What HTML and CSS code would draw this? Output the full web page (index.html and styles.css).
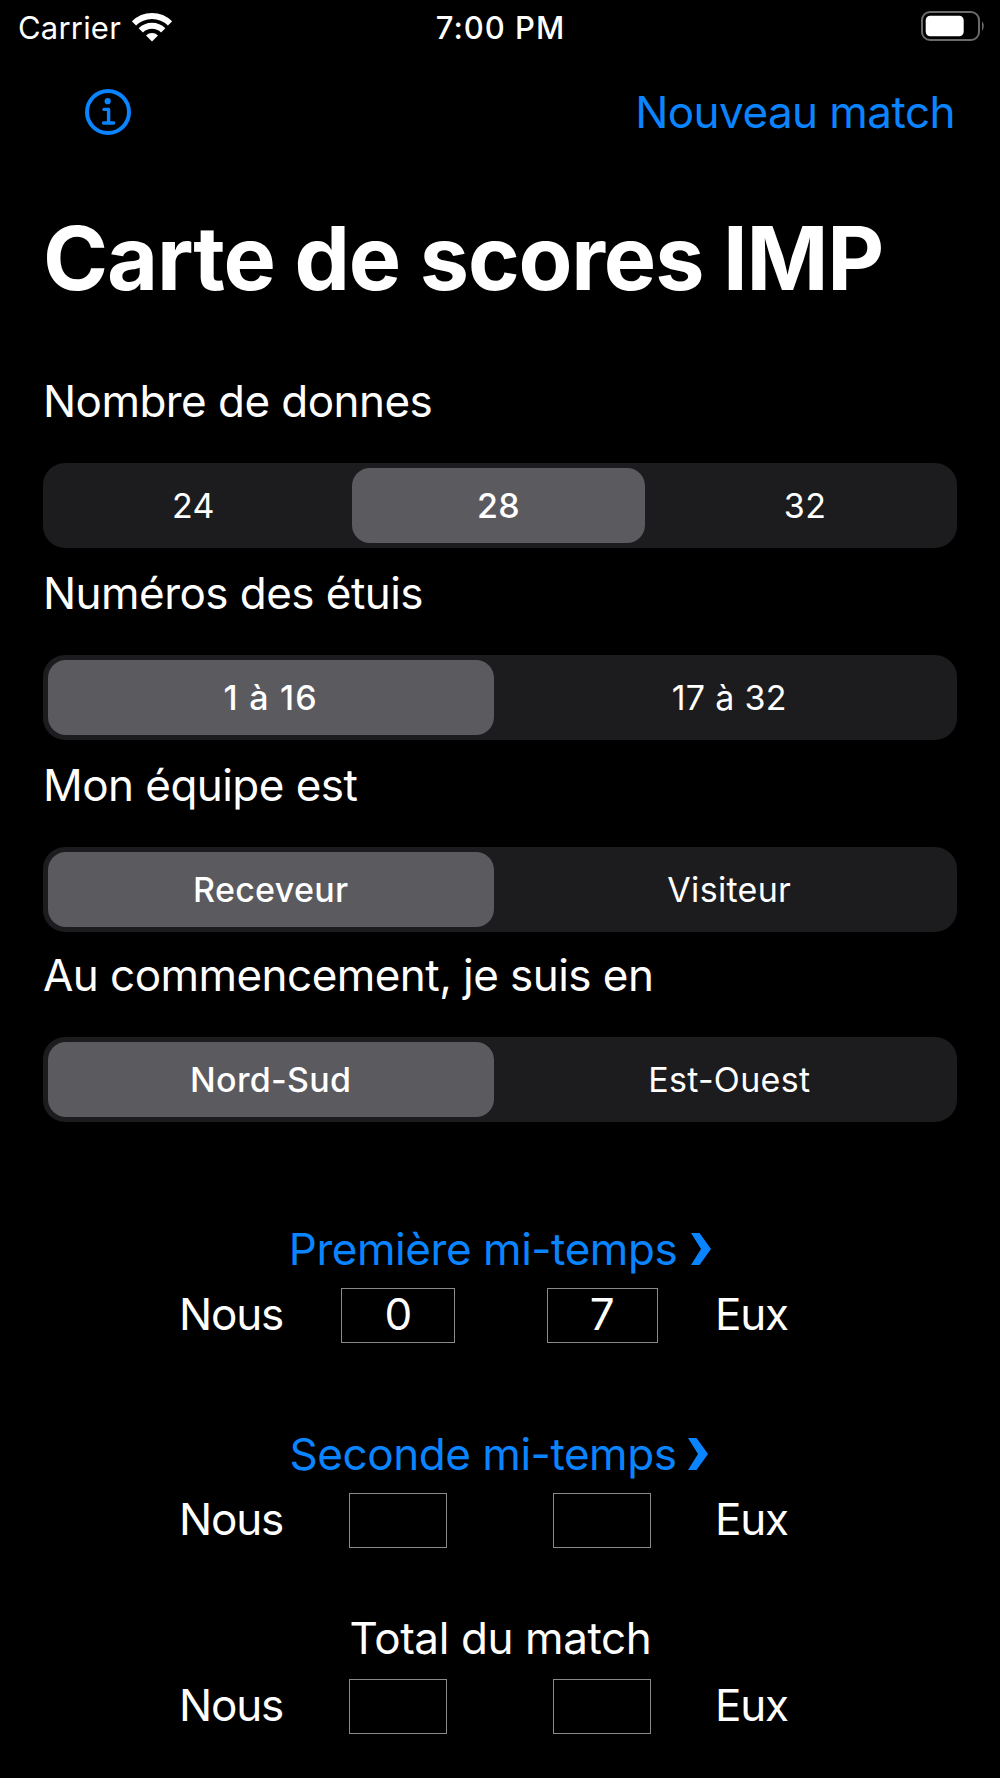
FILE: index.html
```html
<!DOCTYPE html>
<html lang="fr">
<head>
    <meta charset="UTF-8">
    <meta name="viewport" content="width=device-width, initial-scale=1.0">
    <title>Carte de scores IMP</title>
    <link rel="stylesheet" href="styles.css">
</head>
<body>
    <div id="app">
        <!-- Status bar -->
        <div class="status-bar">
            <div class="carrier">
                <span>Carrier</span>
                <svg width="40" height="29" viewBox="0 0 40 29">
                    <path d="M2 10.5 A25.5 25.5 0 0 1 38 10.5" fill="none" stroke="#fff" stroke-width="6"/>
                    <path d="M8.8 17.3 A15.8 15.8 0 0 1 31.2 17.3" fill="none" stroke="#fff" stroke-width="6"/>
                    <path d="M20 28.5 L14 22.4 A8.6 8.6 0 0 1 26 22.4 Z" fill="#fff"/>
                </svg>
            </div>
            <span class="time">7:00 PM</span>
            <svg class="battery" width="64" height="30" viewBox="0 0 64 30">
                <rect x="1" y="1" width="57" height="28" rx="8" fill="none" stroke="#6b6b6b" stroke-width="2"/>
                <rect x="4.7" y="4.7" width="38" height="20.6" rx="4.5" fill="#fff"/>
                <path d="M61 10 Q64.5 15 61 20 Z" fill="#6b6b6b"/>
            </svg>
        </div>

        <!-- Navigation -->
        <nav class="nav-bar">
            <a href="#" aria-label="Informations">
                <svg width="46" height="46" viewBox="0 0 46 46" fill="none" stroke="#0a84ff">
                    <circle cx="23" cy="23" r="21" stroke-width="4"/>
                    <circle cx="22.7" cy="12.2" r="3.1" fill="#0a84ff" stroke="none"/>
                    <path d="M19 20.4 H23.6 V34 M18.6 34 H28.6" stroke-width="3.4" stroke-linecap="round" stroke-linejoin="round"/>
                </svg>
            </a>
            <a href="#">Nouveau match</a>
        </nav>

        <h1>Carte de scores IMP</h1>

        <!-- Match settings -->
        <div class="field">
            <p>Nombre de donnes</p>
            <div class="segments three">
                <button>24</button>
                <button class="selected">28</button>
                <button>32</button>
            </div>
        </div>
        <div class="field">
            <p>Numéros des étuis</p>
            <div class="segments">
                <button class="selected range">1 à 16</button>
                <button>17 à 32</button>
            </div>
        </div>
        <div class="field">
            <p>Mon équipe est</p>
            <div class="segments">
                <button class="selected">Receveur</button>
                <button>Visiteur</button>
            </div>
        </div>
        <div class="field last">
            <p>Au commencement, je suis en</p>
            <div class="segments">
                <button class="selected">Nord-Sud</button>
                <button>Est-Ouest</button>
            </div>
        </div>

        <!-- Scores -->
        <div class="half first-half">
            <a href="#">
                <span>Première mi-temps</span>
                <svg width="20" height="32" viewBox="0 0 20 32"><path d="M0 0 H8.5 L20 16 L8.5 32 H0 L10 16 Z" fill="#0a84ff"/></svg>
            </a>
            <div class="score">
                <span>Nous</span>
                <div><output class="wide">0</output></div>
                <div><output class="medium">7</output></div>
                <span>Eux</span>
            </div>
        </div>
        <div class="half second-half">
            <a href="#">
                <span>Seconde mi-temps</span>
                <svg width="20" height="32" viewBox="0 0 20 32"><path d="M0 0 H8.5 L20 16 L8.5 32 H0 L10 16 Z" fill="#0a84ff"/></svg>
            </a>
            <div class="score">
                <span>Nous</span>
                <div><output></output></div>
                <div><output></output></div>
                <span>Eux</span>
            </div>
        </div>
        <div class="half total">
            <p>Total du match</p>
            <div class="score">
                <span>Nous</span>
                <div><output></output></div>
                <div><output></output></div>
                <span>Eux</span>
            </div>
        </div>
    </div>
</body>
</html>
```
FILE: styles.css
```css
/* Global Styles */
* {
    box-sizing: border-box;
}

body {
    margin: 0;
    background: #000;
    color: #fff;
    font-family: Inter, 'Liberation Sans', sans-serif;
    font-size: 44px;
    letter-spacing: -0.55px;
}

#app {
    width: 1000px;
    height: 1778px;
    overflow: hidden;
}

p {
    margin: 0;
}

a {
    color: #0a84ff;
    text-decoration: none;
}

svg {
    display: block;
}

/* Status bar */
.status-bar {
    display: grid;
    grid-template-columns: 1fr auto 1fr;
    align-items: center;
    height: 55px;
    padding: 0 15px 0 18px;
    font-size: 31px;
    letter-spacing: 0.2px;
}

.carrier {
    display: flex;
    align-items: center;
    gap: 11px;
}

.time {
    margin-right: 2px;
    font-weight: 500;
    letter-spacing: 1px;
}

.battery {
    justify-self: end;
    margin-bottom: 3px;
}

/* Navigation */
.nav-bar {
    display: flex;
    justify-content: space-between;
    align-items: center;
    height: 114px;
    padding: 0 45px 0 85px;
}

h1 {
    margin: 34px 0 43px;
    padding-left: 43px;
    font-size: 88px;
    font-weight: 700;
    line-height: 110px;
    letter-spacing: -1.15px;
}

/* Settings */
.field {
    padding: 0 43px;
}

.field p {
    line-height: 91px;
    margin-bottom: 16px;
}

.field.last {
    margin-top: -2px;
}

.segments {
    display: grid;
    grid-template-columns: 1fr 1fr;
    gap: 13px;
    height: 85px;
    padding: 5px;
    background: #1c1c1e;
    border-radius: 22px;
}

.segments.three {
    grid-template-columns: 291fr 293fr 294fr;
}

button {
    padding: 0 0 1px;
    border: none;
    border-radius: 18px;
    background: none;
    color: #fff;
    font-family: inherit;
    font-size: 34px;
    letter-spacing: 0.3px;
}

button.selected {
    background: #5b5a5f;
    font-weight: 500;
}

button.range {
    letter-spacing: 1.2px;
}

/* Scores */
.half > a,
.half > p {
    display: flex;
    justify-content: center;
    align-items: center;
    gap: 14px;
    line-height: 60px;
    margin-bottom: 9px;
}

.half > a {
    letter-spacing: -0.45px;
}

.first-half {
    margin-top: 97px;
}

.second-half {
    margin-top: 81px;
}

.second-half > a {
    gap: 12px;
    padding-right: 2px;
}

.total {
    margin-top: 60px;
}

.half.total > p {
    margin-bottom: 11px;
    padding-left: 1px;
    letter-spacing: -0.4px;
}

.score {
    display: grid;
    grid-template-columns: 117px 204px 204px 1fr;
    align-items: center;
    height: 55px;
    padding-left: 179px;
    line-height: 52px;
}

.score > span {
    padding-bottom: 3px;
    letter-spacing: -1.2px;
}

.score > span:last-child {
    padding-left: 11px;
}

.score div {
    display: flex;
    justify-content: center;
}

output {
    width: 98px;
    height: 55px;
    line-height: 51px;
    border: 1px solid #8a8a8a;
    text-align: center;
}

output.wide {
    width: 114px;
}

output.medium {
    width: 111px;
}
```
